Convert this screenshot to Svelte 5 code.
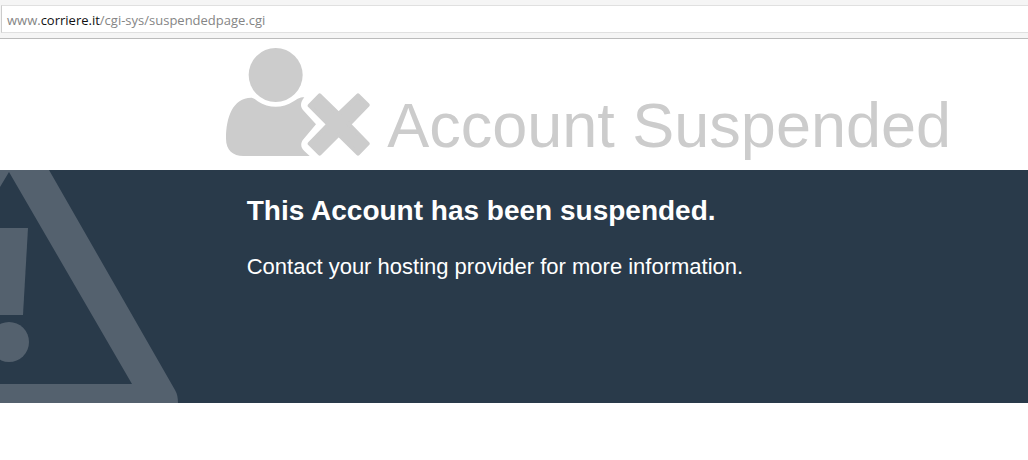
<script lang="ts">
    const host = 'corriere.it';
    const path = '/cgi-sys/suspendedpage.cgi';
</script>

<div class="toolbar">
    <div class="address" role="textbox" tabindex="0" aria-label="Address" contenteditable="true" spellcheck="false">www.<span class="host">{host}</span>{path}</div>
</div>

<header>
    <svg class="user-icon" viewBox="33 24 432 324" aria-hidden="true">
        <circle cx="182" cy="105" r="81" />
        <path d="M110 173 C54 172 33 232 33 296 C33 330 54 348 85 348 H284 L268 333 C256 322 256 308 266 297 L303 253 L264 210 C255 199 256 187 268 172 C252 172 247 177 236 184 C201 206 163 206 128 184 Q118 174 110 173 Z" />
        <path class="cross" d="M314 166 L371 222 L429 166 L458 195 L402 253 L458 311 L429 341 L371 284 L314 341 L284 311 L340 253 L284 197 Z" />
    </svg>
    <h1>Account Suspended</h1>
</header>

<main>
    <div class="warning">
        <svg viewBox="0 0 178 233" aria-hidden="true">
            <path fill-rule="evenodd" d="M0 0 H49 L175 220 Q178 225 178 233 H0 Z M9 2 L0 17 V214 H132 Z" />
            <path d="M0 58 H28 L23 145 H0 Z" />
            <circle cx="9" cy="172" r="20" />
        </svg>
    </div>
    <section>
        <h2>This Account has been suspended.</h2>
        <p>Contact your hosting provider for more information.</p>
    </section>
</main>

<style>
    :global(body) {
        margin: 0;
        background: #fff;
        font-family: "Liberation Sans", Arial, sans-serif;
    }

    .toolbar {
        padding: 5px 0 5px 1px;
        background: #f5f5f5;
        border-bottom: 1px solid #bbb;
    }

    .address {
        padding: 2px 5px 0;
        border: 1px solid #e0e0e0;
        border-left-color: #ccc;
        border-right: 0;
        background: #fff;
        color: #858585;
        font-family: "Open Sans", "Noto Sans", sans-serif;
        font-size: 13px;
        line-height: 24px;
        white-space: nowrap;
        outline: none;
    }

    .host {
        color: #111;
    }

    header {
        display: flex;
        align-items: flex-end;
        gap: 17px;
        padding: 9px 0 14px 22%;
        color: #ccc;
    }

    .user-icon {
        flex: none;
        width: 144px;
        height: 108px;
        fill: currentColor;
    }

    .cross {
        stroke: currentColor;
        stroke-width: 12;
        stroke-linejoin: round;
    }

    h1 {
        margin: 0;
        font-size: 63px;
        font-weight: normal;
        line-height: 62px;
        white-space: nowrap;
    }

    main {
        display: flex;
        background: #293a4a;
        color: #fff;
    }

    .warning {
        flex: none;
        width: 24%;
    }

    .warning svg {
        display: block;
        width: 178px;
        height: 233px;
        fill: #54616e;
    }

    section {
        padding-top: 25px;
    }

    h2 {
        margin: 0 0 24px;
        font-size: 28px;
        line-height: 32px;
    }

    p {
        margin: 0;
        font-size: 22px;
        line-height: 32px;
    }
</style>
